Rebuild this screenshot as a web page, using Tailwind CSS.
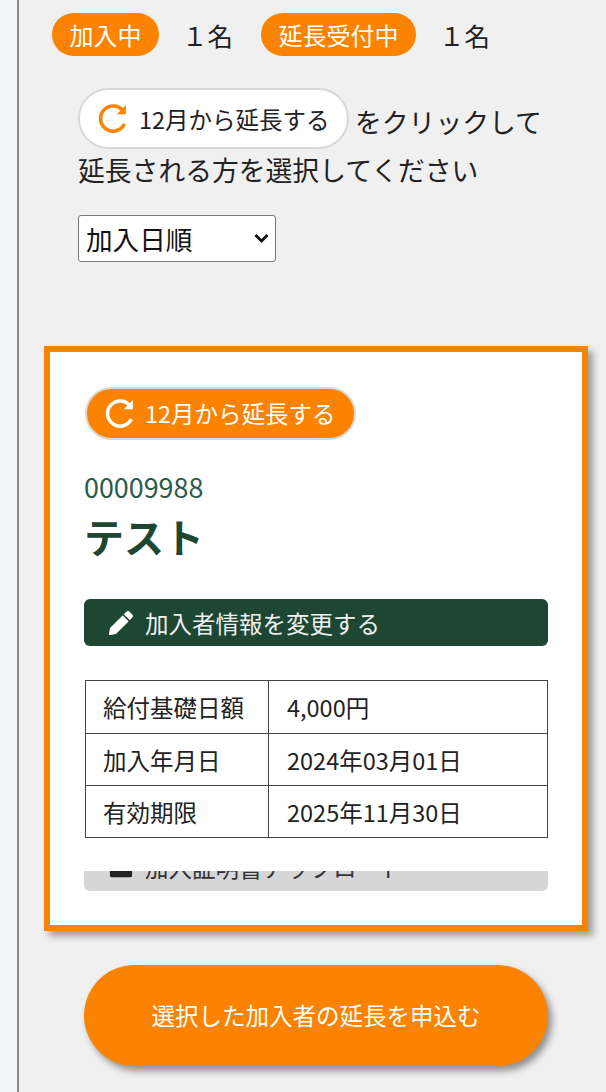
<!DOCTYPE html>
<html lang="ja">
<head>
<meta charset="utf-8">
<script src="https://cdn.jsdelivr.net/npm/@tailwindcss/browser@4"></script>
</head>
<body class="w-[606px] h-[1092px] overflow-hidden bg-[#f0f0f0] font-['Noto_Sans_CJK_JP','Noto_Sans',sans-serif] text-[#222]">
<div class="flex h-[1092px]">
  <div class="w-[19px] shrink-0 bg-[#f2f5f5] border-r-2 border-[#8a8a8a]"></div>
  <main class="flex-1 min-w-0 pt-[13px] pl-[25px]">
    <div class="flex items-center h-[43px] pl-[8px] whitespace-nowrap">
      <span class="flex items-center justify-center w-[107px] h-[43px] rounded-full bg-[#fb8300] text-white text-[24px]">加入中</span>
      <span class="ml-[23px] w-[52px] text-[25.5px] leading-none">１名</span>
      <span class="ml-[27px] flex items-center justify-center w-[155px] h-[43px] rounded-full bg-[#fb8300] text-white text-[24px]">延長受付中</span>
      <span class="ml-[23px] text-[25.5px] leading-none">１名</span>
    </div>

    <div class="mt-[32px] pl-[34px] w-[520px] text-[26.8px] leading-[47px]">
      <div class="flex items-center h-[61px] whitespace-nowrap">
        <span class="flex items-center w-[271px] h-[61px] rounded-full bg-white border-2 border-[#d8d8d8] pl-[17px] text-[23.5px]">
          <svg class="w-[33px] h-[33px] mr-[9px]" viewBox="0 0 32 32" fill="none" stroke="#fb8300" stroke-width="3.4"><path d="M26.6 21.4A12.2 12.2 0 1 1 25 8.2"/><path d="M28 3v8.8H19.2" fill="#fb8300" stroke="none"/></svg>
          <span class="relative top-[1px]">12月から延長する</span>
        </span>
        <span class="ml-[6px] relative top-[3px]">をクリックして</span>
      </div>
      <div class="h-[47px] mt-[-3px]">延長される方を選択してください</div>
    </div>

    <div class="relative ml-[34px] mt-[22px] w-[198px] h-[47px]">
      <select class="appearance-none block w-full h-full pl-[7px] bg-white border-[1.5px] border-[#777] rounded-[3px] text-[26.6px] text-[#111]">
        <option>加入日順</option>
      </select>
      <svg class="absolute right-[7px] top-[18px] w-[15px] h-[11px] pointer-events-none" viewBox="0 0 15 11" fill="none" stroke="#111" stroke-width="3"><path d="M1.5 2l6 6 6-6"/></svg>
    </div>

    <section class="mt-[84px] w-[544px] h-[585px] bg-white border-[6px] border-[#fb8300] shadow-[5px_5px_7px_rgba(0,0,0,0.35)] pt-[35px] pl-[34px] pr-[34px]">
      <div class="flex items-center ml-[1px] w-[271px] h-[53px] rounded-full bg-[#fb8300] border-2 border-[#d8d8d8] pl-[17px] text-white text-[23.5px] whitespace-nowrap">
        <svg class="w-[33px] h-[33px] mr-[8px]" viewBox="0 0 32 32" fill="none" stroke="#ffffff" stroke-width="3.4"><path d="M26.6 21.4A12.2 12.2 0 1 1 25 8.2"/><path d="M28 3v8.8H19.2" fill="#ffffff" stroke="none"/></svg>
        12月から延長する
      </div>
      <div class="mt-[28px] text-[26.9px] leading-[38px] text-[#2b5a4a]">00009988</div>
      <div class="mt-[4px] text-[40px] leading-[52px] font-bold text-[#1d4732]">テスト</div>
      <div class="mt-[37px] flex items-center h-[47px] rounded-[6px] bg-[#1d4732] pl-[25px] text-[23.5px] text-[#f0f0f0]">
        <svg class="w-[24px] h-[24px] mr-[12px]" viewBox="0 0 512 512" fill="#ffffff"><path d="M497 141l-46 46c-5 5-12 5-17 0L325 78c-5-5-5-12 0-17l46-46c19-19 49-19 68 0l58 58c19 19 19 49 0 68zM284 102L21 365 0 486c-3 16 11 30 27 27l121-21 263-263c5-5 5-12 0-17L301 102c-5-5-12-5-17 0z"/></svg>
        <span class="relative top-[1px]">加入者情報を変更する</span>
      </div>
      <table class="mt-[34px] ml-[1px] w-[463px] border-collapse text-[23.5px] text-[#222] bg-white">
        <tbody>
          <tr class="h-[53px]"><td class="w-[183px] border-[1.5px] border-[#444] pl-[17px] pt-[2px]">給付基礎日額</td><td class="border-[1.5px] border-[#444] pl-[18px] pt-[2px]">4,000円</td></tr>
          <tr class="h-[52px]"><td class="border-[1.5px] border-[#444] pl-[17px] pt-[2px]">加入年月日</td><td class="border-[1.5px] border-[#444] pl-[18px] pt-[2px]">2024年03月01日</td></tr>
          <tr class="h-[52px]"><td class="border-[1.5px] border-[#444] pl-[17px] pt-[2px]">有効期限</td><td class="border-[1.5px] border-[#444] pl-[18px] pt-[2px]">2025年11月30日</td></tr>
        </tbody>
      </table>
      <div class="mt-[33px] h-[20px] overflow-hidden rounded-b-[6px] bg-[#d6d6d6]">
        <div class="flex items-center h-[47px] mt-[-27px] pl-[25px] text-[23.5px] text-[#333] whitespace-nowrap">
          <svg class="w-[24px] h-[24px] mr-[12px]" viewBox="0 0 26 26" fill="#222"><rect x="1" y="3" width="24" height="20" rx="2"/></svg>
          加入証明書アップロード
        </div>
      </div>
    </section>

    <button class="block mt-[34px] ml-[40px] w-[464px] h-[101px] rounded-full bg-[#fb8300] text-white text-[23.5px] shadow-[4px_5px_7px_rgba(0,0,0,0.4)]">選択した加入者の延長を申込む</button>
  </main>
</div>
</body>
</html>
